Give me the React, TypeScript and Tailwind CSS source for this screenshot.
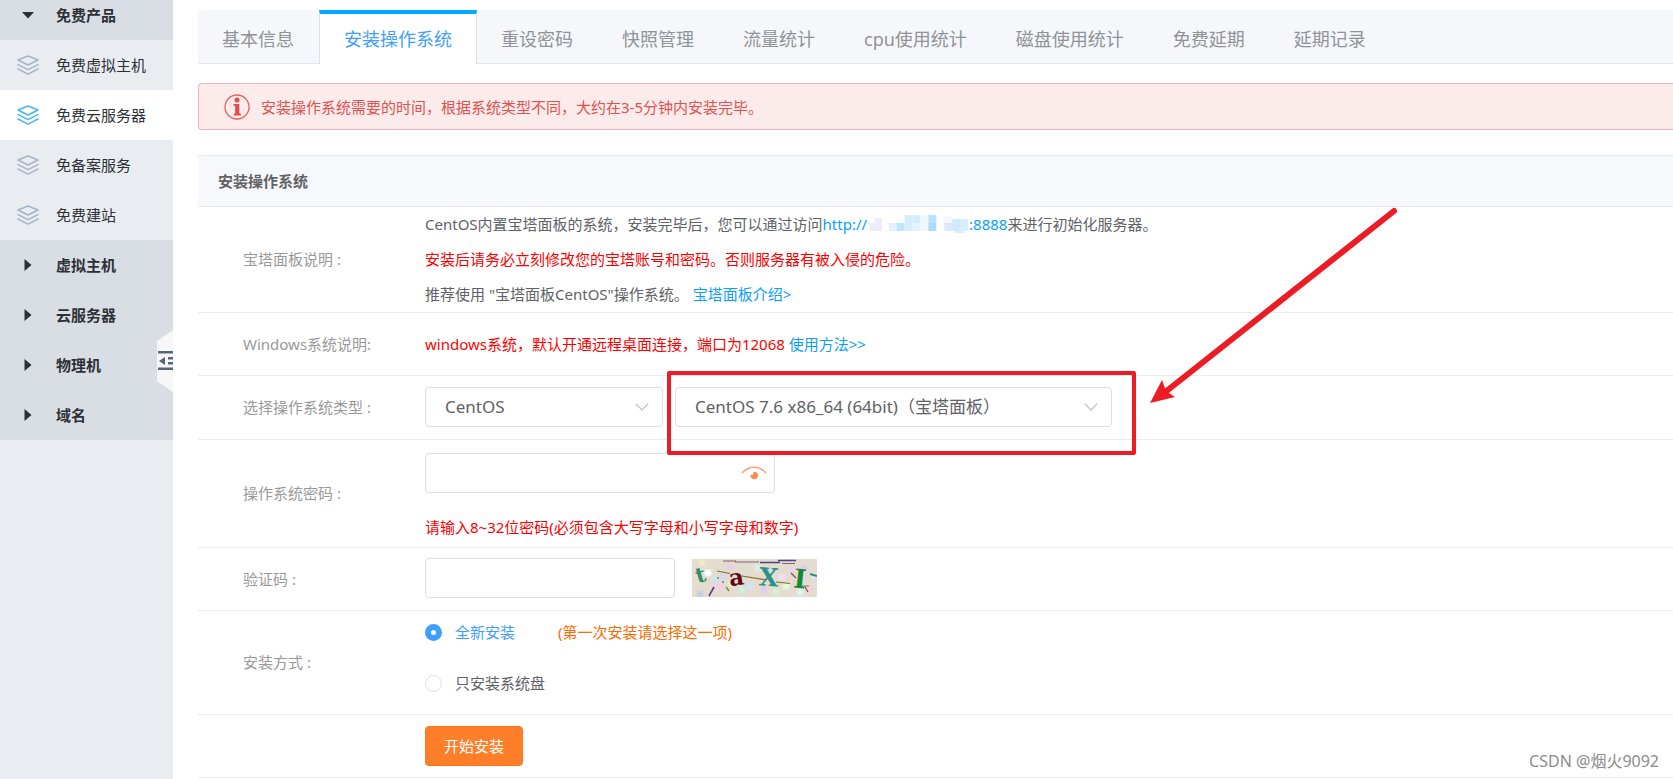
import { useState } from "react";
import type { ReactNode } from "react";

const fontStack = "font-['Noto_Sans','Noto_Sans_CJK_SC',sans-serif]";

function LayersIcon({ active }: { active?: boolean }) {
  return (
    <svg
      viewBox="0 0 22 20"
      className={"h-5 w-[22px] " + (active ? "text-[#4db5ef]" : "text-[#a7b5c4]")}
      fill="none"
      stroke="currentColor"
      strokeWidth="1.6"
      strokeLinejoin="round"
      strokeLinecap="round"
      aria-hidden="true"
    >
      <path d="M11 1 21 5 11 10 1 5Z" />
      <path d="M1 9.6 11 14.6 21 9.6" />
      <path d="M1 14 11 19.1 21 14" />
    </svg>
  );
}

function SideLink({ text, active }: { text: string; active?: boolean }) {
  return (
    <a href="#" className={"flex h-[50px] items-center pl-[17px] " + (active ? "bg-white" : "")}>
      <LayersIcon active={active} />
      <span className="ml-[17px]">{text}</span>
    </a>
  );
}

function SideGroup({ text }: { text: string }) {
  return (
    <a href="#" className="flex h-[50px] items-center pl-6 font-semibold">
      <svg viewBox="0 0 8 12" className="h-3 w-2" aria-hidden="true">
        <path d="M0.5 0 7.5 6 0.5 12Z" fill="#2d3136" />
      </svg>
      <span className="ml-6">{text}</span>
    </a>
  );
}

function Row({ label, htmlFor, height, children }: { label: string; htmlFor?: string; height: string; children: ReactNode }) {
  return (
    <div className={"flex items-center border-b border-[#ebebeb] " + height}>
      <div className="w-[227px] shrink-0 pl-[45px] text-[#999]">
        {htmlFor ? <label htmlFor={htmlFor}>{label}</label> : label}
      </div>
      <div className="grow">{children}</div>
    </div>
  );
}

function Select({ id, label, options, width }: { id: string; label: string; options: string[]; width: string }) {
  return (
    <div className={"relative " + width}>
      <select
        id={id}
        aria-label={label}
        className="block h-10 w-full appearance-none rounded border border-[#dcdfe6] bg-white pl-[19px] pr-10 text-[17px] text-[#606266] outline-none"
      >
        {options.map((o) => (
          <option key={o}>{o}</option>
        ))}
      </select>
      <svg
        viewBox="0 0 14 8"
        className="pointer-events-none absolute right-[14px] top-4 h-2 w-[14px]"
        fill="none"
        stroke="#c0c4cc"
        strokeWidth="1.3"
        aria-hidden="true"
      >
        <path d="M0.8 0.8 7 7 13.2 0.8" />
      </svg>
    </div>
  );
}

const radioClass =
  "h-[17px] w-[17px] appearance-none rounded-full border border-[#dcdfe6] bg-white checked:border-[6px] checked:border-[#409eff]";

const tabs = ["基本信息", "安装操作系统", "重设密码", "快照管理", "流量统计", "cpu使用统计", "磁盘使用统计", "免费延期", "延期记录"];

const mosaic: [number, number, number, number, string][] = [
  [0, 8, 7, 8, "#efecfc"],
  [6, 3, 7, 13, "#eeebfc"],
  [20, 8, 8, 8, "#e0f3ff"],
  [28, 8, 8, 8, "#bfe3fc"],
  [36, 0, 8, 16, "#d6edfe"],
  [44, 0, 8, 8, "#d3ecfe"],
  [44, 8, 8, 8, "#e3f3ff"],
  [52, 0, 8, 16, "#f0f8ff"],
  [60, 0, 8, 8, "#b9e0fd"],
  [60, 8, 8, 8, "#a9d9fd"],
  [76, 1, 8, 7, "#f3f7fe"],
  [76, 8, 8, 8, "#dbe8fc"],
  [84, 4, 8, 12, "#cdeafe"],
  [92, 4, 8, 12, "#d6eefe"],
  [86, 16, 10, 2, "#d6eefe"],
];

const flakes: [number, number, string][] = [
  [10, 4, "#f3ecc0"], [16, 14, "#ffffff"], [8, 35, "#c9cbe6"], [28, 28, "#f0cdf3"], [40, 24, "#e7f4d8"],
  [50, 31, "#c8f2dd"], [58, 27, "#cfe6fb"], [38, 8, "#e5cfe2"], [66, 9, "#d7f0e8"], [72, 31, "#e2c9f2"],
  [84, 33, "#d5f5d0"], [94, 27, "#e4fbe0"], [100, 11, "#ead3f0"], [112, 9, "#e1c8ec"], [118, 30, "#f0d0e0"],
  [108, 33, "#dff5ee"], [32, 17, "#d9d4f6"], [90, 18, "#f3dff3"], [24, 20, "#cfe5f3"], [122, 17, "#d5e9f5"],
];

function Captcha() {
  return (
    <svg viewBox="0 0 125 38" className="h-[38px] w-[125px]" role="img" aria-label="验证码图片">
      <rect width="125" height="38" fill="#e4dccf" />
      {flakes.map(([x, y, c], i) => (
        <path
          key={i}
          d={`M${x - 4} ${y}h8M${x} ${y - 4}v8M${x - 3} ${y - 3}l6 6M${x + 3} ${y - 3}l-6 6`}
          stroke={c}
          strokeWidth="1.4"
        />
      ))}
      <path d="M31 2h13M43 3h24M90 4.5h13" stroke="#84606f" strokeWidth="1.2" />
      <path d="M68 3.5h20M86 1.5h18" stroke="#46457f" strokeWidth="1.4" />
      <path d="M25 12 38 14.5M50 17 75 21M84 23 98 24.500M110 27h7" stroke="#7c7421" strokeWidth="1.2" />
      <path d="M22 28 17 37" stroke="#5b3d8b" strokeWidth="1.6" />
      <path d="M34 28l3 4M26 18v2M30 23h2" stroke="#6f8f20" strokeWidth="1.4" />
      <path d="M99 14l5 5M113 28l3 5" stroke="#7a4a60" strokeWidth="1.2" />
      <path d="M118 15 125 17" stroke="#2f8f63" strokeWidth="2" />
      <g className="font-['DejaVu_Serif',serif] font-bold">
        <text x="4" y="23" fontSize="21" fill="#2f8f6c" transform="rotate(-16 9 17)">t</text>
        <text x="37" y="26" fontSize="23" fill="#5c0a14" transform="rotate(-8 46 19)">a</text>
        <text x="67" y="27" fontSize="25" fill="#2a9389" transform="rotate(4 78 18)">X</text>
        <text x="102" y="29" fontSize="26" fill="#128a38" transform="rotate(6 108 20)">I</text>
      </g>
    </svg>
  );
}

export default function App() {
  const [mode, setMode] = useState("new");
  const [shown, setShown] = useState(false);
  return (
    <div className={"relative flex min-h-screen overflow-hidden bg-white text-[15px] text-[#606266] " + fontStack}>
      <aside className="relative w-[173px] shrink-0 bg-[#e9edf2] text-[#2d3136]">
        <a href="#" className="flex h-10 items-center bg-[#d9dee4] pb-[10px] pl-[22px] font-semibold">
          <svg viewBox="0 0 12 7" className="h-[7px] w-3" aria-hidden="true">
            <path d="M0 0H12L6 6.5Z" fill="#2d3136" />
          </svg>
          <span className="ml-[22px]">免费产品</span>
        </a>
        <nav>
          <SideLink text="免费虚拟主机" />
          <SideLink text="免费云服务器" active />
          <SideLink text="免备案服务" />
          <SideLink text="免费建站" />
        </nav>
        <nav className="bg-[#d9dee4]">
          <SideGroup text="虚拟主机" />
          <SideGroup text="云服务器" />
          <SideGroup text="物理机" />
          <SideGroup text="域名" />
        </nav>
        <button type="button" aria-label="收起菜单" className="absolute right-0 top-[330px] h-[62px] w-4">
          <svg viewBox="0 0 16 62" className="h-[62px] w-4" aria-hidden="true">
            <path d="M16 0V62L0 51V11Z" fill="#f7f7f7" />
            <path d="M1 21h15v2.6H1zM1 37.500h15v2.6H1zM11 27h5v2.6h-5zM11 32h5v2.6h-5zM2 31 8 27v8z" fill="#56657a" />
          </svg>
        </button>
      </aside>

      <main className="min-w-0 grow pl-[25px] pt-[10px]">
        <nav className="flex h-[54px] border-b border-[#e4e7ed] bg-[#f5f7fa] text-[18px]">
          {tabs.map((t, i) => (
            <a
              key={t}
              href="#"
              className={
                i === 1
                  ? "-mb-px flex items-center border-x border-t-4 border-x-[#dcdfe6] border-t-[#00a8ff] bg-white px-6 pt-px text-[#409eff]"
                  : "flex items-center border-r border-transparent px-6 pt-[6px] text-[#909399]"
              }
            >
              {t}
            </a>
          ))}
        </nav>

        <div className="mt-[19px] flex h-[47px] items-center rounded-l-sm border border-r-0 border-[#f5b1b4] bg-[#fcebeb] pl-[25px] text-[#e2524f]">
          <svg viewBox="0 0 26 26" className="h-[26px] w-[26px]" aria-hidden="true">
            <circle cx="13" cy="13" r="12" fill="none" stroke="#e9605f" strokeWidth="1.3" />
            <circle cx="13" cy="6" r="2.500" fill="#e54b4b" />
            <path d="M9.500 10h5.800v9.300h1.500V21.500H10v-2h1.200v-7.700H9.500z" fill="#e54b4b" />
          </svg>
          <p className="ml-[11px] pt-0.5">安装操作系统需要的时间，根据系统类型不同，大约在3-5分钟内安装完毕。</p>
        </div>

        <form className="mt-[25px]" onSubmit={(e) => e.preventDefault()}>
          <h2 className="flex h-[52px] items-center border-y border-[#e4e7ed] bg-[#f7f8fb] pl-5 font-semibold">安装操作系统</h2>

          <Row label="宝塔面板说明 :" height="h-[106px]">
            <div className="leading-[35px]">
              <p className="flex items-center">
                CentOS内置宝塔面板的系统，安装完毕后，您可以通过访问
                <a href="#" className="flex items-center text-[#0a9ffb]">
                  http://
                  <svg viewBox="0 0 102 20" className="ml-px h-5 w-[101px]" aria-hidden="true">
                    {mosaic.map(([x, y, w, h, c], i) => (
                      <rect key={i} x={x + 1} y={y} width={w} height={h} fill={c} />
                    ))}
                  </svg>
                  :8888
                </a>
                来进行初始化服务器。
              </p>
              <p className="text-[#f00]">安装后请务必立刻修改您的宝塔账号和密码。否则服务器有被入侵的危险。</p>
              <p>
                推荐使用 "宝塔面板CentOS"操作系统。{" "}
                <a href="#" className="text-[#0a9ffb]">宝塔面板介绍&gt;</a>
              </p>
            </div>
          </Row>

          <Row label="Windows系统说明:" height="h-[63px]">
            <p className="text-[#f00]">
              windows系统，默认开通远程桌面连接，端口为12068{" "}
              <a href="#" className="text-[#0a9ffb]">使用方法&gt;&gt;</a>
            </p>
          </Row>

          <Row label="选择操作系统类型 :" htmlFor="os-type" height="h-16">
            <div className="flex gap-3 pb-0.5">
              <Select id="os-type" label="选择操作系统类型" options={["CentOS", "Windows"]} width="w-[238px]" />
              <div className="relative">
                <Select id="os-version" label="操作系统版本" options={["CentOS 7.6 x86_64 (64bit)（宝塔面板）"]} width="w-[437px]" />
                <div className="pointer-events-none absolute -left-2 -top-4 z-10 h-[84px] w-[469px] rounded-xs border-4 border-[#ed1c24]" />
                <svg
                  viewBox="0 0 252 202"
                  className="pointer-events-none absolute -top-[180px] left-[473px] h-[202px] w-[252px]"
                  aria-hidden="true"
                >
                  <path d="M246 4 16 186" stroke="#ed1c24" strokeWidth="6" strokeLinecap="round" />
                  <path d="M2 196 14 173 18 184 27 190Z" fill="#ed1c24" />
                </svg>
              </div>
            </div>
          </Row>

          <Row label="操作系统密码 :" htmlFor="os-password" height="h-[108px]">
            <div className="relative mt-1 w-[350px]">
              <input
                id="os-password"
                type={shown ? "text" : "password"}
                className="block h-10 w-full rounded border border-[#dcdfe6] bg-white px-5 pr-10 outline-none"
              />
              <button type="button" aria-label="显示密码" onClick={() => setShown(!shown)} className="absolute right-2 top-[13px]">
                <svg viewBox="0 0 26 14" className="h-[14px] w-[26px]" aria-hidden="true">
                  <path d="M1 7Q6 1.2 13 1.2T25 7" fill="none" stroke="#fd9a6b" strokeWidth="1.4" />
                  <path d="M12.500 5.800A3.800 3.800 0 1 1 9.600 8.400L12 9Z" fill="#fd8a55" />
                </svg>
              </button>
            </div>
            <p className="mt-[23px] leading-[22px] text-[#f00]">请输入8~32位密码(必须包含大写字母和小写字母和数字)</p>
          </Row>

          <Row label="验证码 :" htmlFor="captcha" height="h-[63px]">
            <div className="flex items-center gap-[17px] pb-0.5">
              <input id="captcha" type="text" className="h-10 w-[250px] rounded border border-[#dcdfe6] bg-white px-5 outline-none" />
              <Captcha />
            </div>
          </Row>

          <Row label="安装方式 :" height="h-[104px]">
            <div className="pb-[10px]">
              <div className="flex h-[51px] items-center">
                <label className={"flex items-center gap-[13px] " + (mode === "new" ? "text-[#409eff]" : "")}>
                  <input type="radio" name="mode" className={radioClass} checked={mode === "new"} onChange={() => setMode("new")} />
                  全新安装
                </label>
                <span className="ml-[43px] text-[#ff6a00]">(第一次安装请选择这一项)</span>
              </div>
              <div className="flex h-[51px] items-center">
                <label className={"flex items-center gap-[13px] " + (mode === "disk" ? "text-[#409eff]" : "")}>
                  <input type="radio" name="mode" className={radioClass} checked={mode === "disk"} onChange={() => setMode("disk")} />
                  只安装系统盘
                </label>
              </div>
            </div>
          </Row>

          <Row label="" height="h-[63px]">
            <button type="submit" className="h-10 rounded border border-[#ff7519] bg-[#ff7e29] px-[18px] text-white">
              开始安装
            </button>
          </Row>
        </form>
      </main>

      <span className="absolute bottom-[6px] right-[14px] text-base text-[#8c8c8c]">CSDN @烟火9092</span>
    </div>
  );
}
